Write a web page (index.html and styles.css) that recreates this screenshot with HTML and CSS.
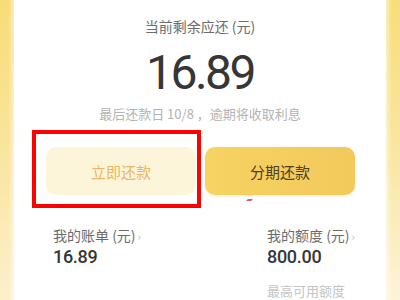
FILE: index.html
```html
<!DOCTYPE html>
<html lang="zh-CN">
<head>
<meta charset="utf-8">
<link rel="stylesheet" href="styles.css">
</head>
<body>
<div class="page">
  <div class="strip strip-left"></div>
  <main class="card">
    <div class="title">当前剩余应还 (元)</div>
    <div class="amount">16.89</div>
    <div class="note">最后还款日 10/8 ，逾期将收取利息</div>
    <div class="actions">
      <button class="btn btn-light">立即还款</button>
      <button class="btn btn-gold">分期还款</button>
    </div>
    <div class="stats">
      <div class="stat">
        <div class="stat-label">我的账单 (元)<span class="chev">›</span></div>
        <div class="stat-value">16.89</div>
      </div>
      <div class="stat">
        <div class="stat-label">我的额度 (元)<span class="chev">›</span></div>
        <div class="stat-value">800.00</div>
        <div class="stat-sub">最高可用额度</div>
      </div>
    </div>
    <div class="highlight"></div>
    <div class="mark"></div>
  </main>
  <div class="strip strip-right"></div>
</div>
</body>
</html>
```

FILE: styles.css
```css
* { box-sizing: border-box; }
html, body { margin: 0; padding: 0; }
body {
  width: 400px;
  height: 300px;
  overflow: hidden;
  background: #fff;
  font-family: "Noto Sans CJK SC", "Noto Sans", sans-serif;
}
.page {
  display: flex;
  height: 300px;
}
.strip {
  width: 14px;
  flex: none;
}
.strip-left {
  background: linear-gradient(to right, rgba(255,255,255,0) 60%, rgba(255,255,255,0.5)),
              linear-gradient(to bottom, #f8dc78 0%, #f9e499 45%, #fcf0cc 100%);
}
.strip-right {
  background: linear-gradient(to left, rgba(255,255,255,0) 60%, rgba(255,255,255,0.5)),
              linear-gradient(to bottom, #f8dd7c 0%, #f9e59c 45%, #fdf3d8 100%);
}
.card {
  flex: 1;
  position: relative;
  background: #fff;
  padding-top: 16px;
  display: flex;
  flex-direction: column;
}
.title {
  text-align: center;
  font-size: 14px;
  line-height: 20px;
  color: #6b6b6b;
}
.amount {
  margin-top: 13px;
  text-align: center;
  font-family: Roboto, "Noto Sans", sans-serif;
  font-weight: 400;
  font-size: 48px;
  line-height: 48px;
  letter-spacing: -2.5px;
  color: #363636;
}
.note {
  margin-top: 8px;
  text-align: center;
  font-size: 13px;
  line-height: 18px;
  color: #b3b3b3;
}
.actions {
  margin-top: 24px;
  display: flex;
  gap: 9px;
  padding: 0 31px 0 32px;
}
.btn {
  flex: 1;
  height: 48px;
  border: none;
  border-radius: 10px;
  font-family: "Noto Sans CJK SC", sans-serif;
  font-size: 15px;
  padding: 0;
}
.btn-light {
  background: #fdf5da;
  color: #e8b86a;
}
.btn-gold {
  background: linear-gradient(to right, #f6d362, #f3c95c);
  color: #4d3d1e;
  box-shadow: 0 1px 3px rgba(220, 180, 80, 0.25);
}
.stats {
  margin-top: 30px;
  display: grid;
  grid-template-columns: 214px 1fr;
  padding-left: 39px;
}
.stat-label {
  font-size: 14px;
  line-height: 20px;
  color: #6b6b6b;
}
.chev {
  font-size: 11px;
  color: #bbb;
  margin-left: 2px;
}
.stat-value {
  font-family: Roboto, "Noto Sans", sans-serif;
  font-weight: 500;
  font-size: 18px;
  line-height: 22px;
  letter-spacing: -0.3px;
  color: #363636;
}
.stat-sub {
  margin-top: 14px;
  font-size: 13px;
  line-height: 18px;
  color: #c4c4c4;
}
.highlight {
  position: absolute;
  left: 18px;
  top: 130px;
  width: 169px;
  height: 78px;
  border: 4px solid #ff0000;
}
.mark {
  position: absolute;
  left: 233px;
  top: 199px;
  width: 5px;
  height: 2px;
  background: #e8506a;
  transform: skewX(-40deg);
}
```
